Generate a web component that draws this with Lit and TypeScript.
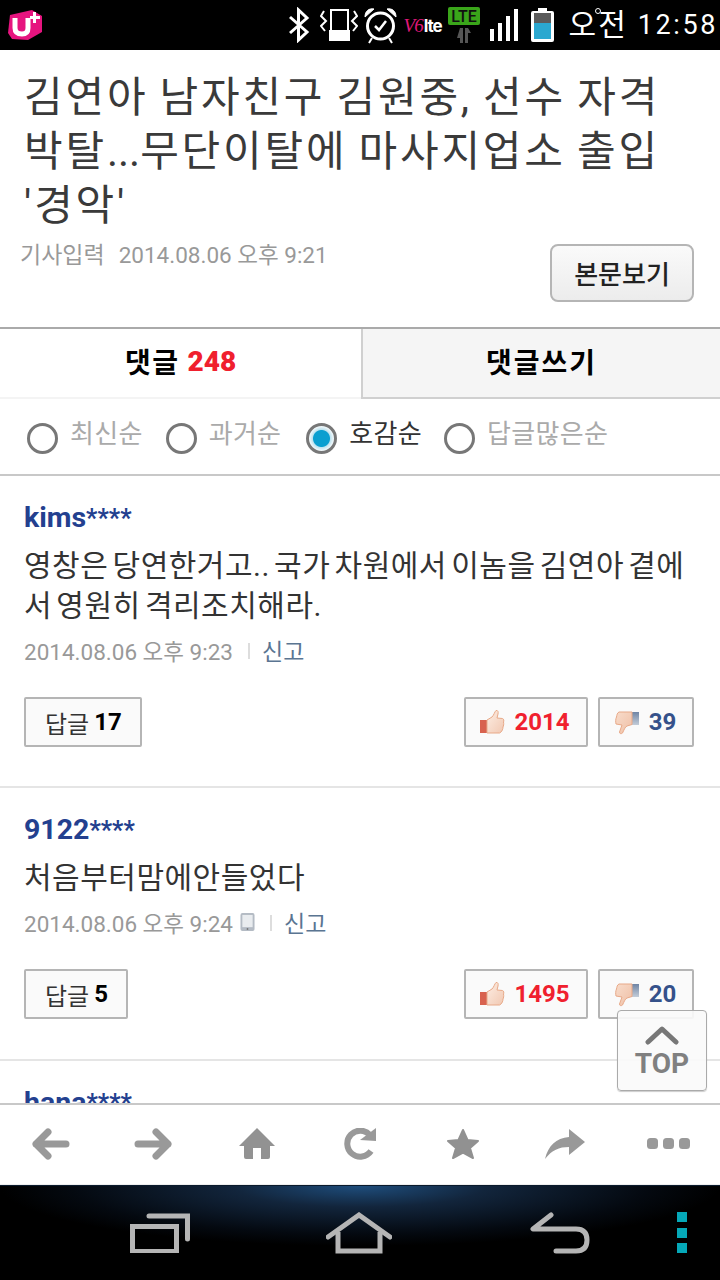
import { LitElement, html, css, svg } from "lit";
import { customElement } from "lit/decorators.js";

const thumbUp = svg`<svg class="thumb" width="26" height="26" viewBox="0 0 26 26"><defs><linearGradient id="tu" x1="0" y1="0" x2="1" y2="1"><stop offset="0" stop-color="#fdeee4"/><stop offset="1" stop-color="#f1c8b2"/></linearGradient></defs><rect x="1" y="11" width="7" height="13" fill="#d8624f"/><path d="M8 11 L13 8 C15 6 15.500 3 17 1.500 C19 1 19.500 3 19 5 L18 9 L23.500 9.500 C25 10 25 12 24.500 13 C25 15 24.500 17 24 18 C24 20 23 22 22 23 L20.500 24 L8 24 Z" fill="url(#tu)" stroke="#e8a988" stroke-width="1"/></svg>`;
const thumbDown = svg`<svg class="thumb" width="26" height="26" viewBox="0 0 26 26"><defs><linearGradient id="td" x1="0" y1="0" x2="1" y2="1"><stop offset="0" stop-color="#f8dccb"/><stop offset="1" stop-color="#efbfa5"/></linearGradient><linearGradient id="tb" x1="0" y1="0" x2="0" y2="1"><stop offset="0" stop-color="#6f85a5"/><stop offset="1" stop-color="#c3ccd8"/></linearGradient></defs><rect x="18" y="3" width="7" height="13" fill="url(#tb)"/><path d="M18 3 L5 3 C3 4 3 6 2.500 8 C1.500 10 1.500 13 2 15 L8 16 L5.500 23 C5.500 25 7.500 25 8.500 24 C10 21 11 18 13 17 L18 15.500 Z" fill="url(#td)" stroke="#e8a988" stroke-width="1"/></svg>`;

interface Comment { user: string; text: string; date: string; mobile: boolean; replies: number; up: number; down: number; }
const COMMENTS: Comment[] = [
  { user: "kims", text: "영창은 당연한거고.. 국가 차원에서 이놈을 김연아 곁에서 영원히 격리조치해라.", date: "2014.08.06 오후 9:23", mobile: false, replies: 17, up: 2014, down: 39 },
  { user: "9122", text: "처음부터맘에안들었다", date: "2014.08.06 오후 9:24", mobile: true, replies: 5, up: 1495, down: 20 },
];

@customElement("app-root")
export class AppRoot extends LitElement {
  static styles = css`
    :host { display: flex; flex-direction: column; width: 720px; height: 1280px; overflow: hidden; position: relative; background: #fff; font-family: Roboto, "Noto Sans CJK KR", sans-serif; }
    .status { height: 50px; flex: none; background: #000; display: flex; align-items: center; color: #fff; }
    .lg { margin-left: 7px; }
    .status-right { margin-left: auto; display: flex; align-items: center; height: 50px; }
    .ml6 { margin-left: 6px; }
    .ml8 { margin-left: 8px; }
    .ml10 { margin-left: 10px; }
    .ml14 { margin-left: 13px; }
    .volte { display: flex; align-items: baseline; width: 36px; margin-left: 7px; margin-top: 2px; }
    .v6 { font: italic 400 19px "Liberation Serif", serif; color: #e0187a; letter-spacing: -1px; }
    .lte { font: 700 17px Inter, sans-serif; color: #fff; letter-spacing: -1px; margin-left: 1px; }
    .ampm { font-size: 30px; letter-spacing: 2px; margin-left: 15px; position: relative; line-height: 50px; white-space: nowrap; }
    .ampm::after { content: ""; position: absolute; left: 26px; top: 8px; width: 4px; height: 4px; border: 1px solid #fff; border-radius: 50%; }
    .clock { font-size: 27px; letter-spacing: 2.600px; margin-left: 10px; margin-right: 2px; line-height: 50px; white-space: nowrap; }
    .main { flex: 1; min-height: 0; overflow: hidden; }
    .head { height: 279px; box-sizing: border-box; padding: 21px 20px 0 24px; border-bottom: 2px solid #aaa; }
    h1 { margin: 0; font-size: 42px; font-weight: 400; line-height: 54px; color: #3a3a3a; height: 161px; letter-spacing: 2.800px; word-spacing: -2px; white-space: nowrap; }
    h1 .line { display: block; }
    h1 .ell { letter-spacing: 0; }
    .head-row { display: flex; justify-content: space-between; align-items: flex-start; margin: 0 6px 0 -4px; }
    .meta { font-size: 23px; color: #999; line-height: 28px; margin-top: 9px; }
    .meta span { margin-left: 14px; font-size: 22.500px; }
    .body-btn { width: 144px; height: 58px; margin-top: 12px; box-sizing: border-box; border: 2px solid #b5b5b5; border-radius: 8px; background: linear-gradient(#fafafa, #ececec); display: flex; align-items: center; justify-content: center; font-size: 26px; font-weight: 500; color: #222; padding-bottom: 2px; }
    .tabs { display: flex; height: 70px; }
    .tab { display: flex; align-items: center; justify-content: center; font-size: 28px; font-weight: 700; color: #000; height: 70px; box-sizing: border-box; padding-bottom: 4px; letter-spacing: 2px; }
    .tab.on { width: 361px; background: #fff; border-bottom: 2px solid #f4f4f4; letter-spacing: 1.500px; }
    .tab.off { flex: 1; background: #f5f5f5; border-left: 2px solid #d0d0d0; border-bottom: 2px solid #d0d0d0; }
    .tab b { color: #f0202e; margin-left: 8px; letter-spacing: 0; }
    .sort { height: 77px; box-sizing: border-box; border-bottom: 2px solid #c8c8c8; display: flex; align-items: center; padding: 0 0 0 27px; font-size: 26px; color: #aaa; letter-spacing: 0.300px; }
    .opt { display: flex; align-items: center; margin-right: 23px; }
    .opt.wide { margin-right: 25px; }
    .opt.sel { margin-right: 22px; }
    .opt span { margin-left: 12px; margin-top: -11px; }
    .opt.sel span { color: #333; }
    .radio { width: 31px; height: 31px; box-sizing: border-box; border: 3px solid #777; border-radius: 50%; margin-top: 3px; background: #fff; }
    .opt.sel .radio { background: radial-gradient(circle, #0a9fd0 0 8px, #bfe3ef 9px, #fff 13px); }
    .comment { height: 312px; box-sizing: border-box; padding: 24px 26px 0 24px; border-bottom: 2px solid #e5e5e5; }
    .comment.second { height: 273px; }
    .comment.peek { height: 60px; }
    .user { font-size: 28.500px; font-weight: 700; color: #23408f; line-height: 36px; }
    .user small { font-size: 25px; }
    .text { font-size: 30px; color: #333; line-height: 40px; margin-top: 9px; letter-spacing: 0.500px; word-spacing: -3.700px; }
    .info { display: flex; align-items: center; font-size: 22.500px; color: #999; margin-top: 9px; height: 30px; }
    .info svg { margin-left: 7px; }
    .sep { width: 2px; height: 16px; background: #ddd; margin: 2px 12px 0 15px; }
    .report { color: #5a7592; font-size: 23px; }
    .actions { display: flex; align-items: center; margin-top: 32px; }
    .btn { height: 50px; box-sizing: border-box; border: 2px solid #b5b5b5; border-radius: 2px; background: #fafafa; display: flex; align-items: center; justify-content: center; font-size: 24px; color: #333; }
    .reply { padding: 0 18px 0 19px; margin-right: auto; }
    .reply b { color: #000; margin-left: 5px; }
    .up { width: 124px; margin-right: 10px; padding-right: 3px; }
    .down { width: 96px; padding-right: 2px; }
    .up b { color: #f0202e; margin-left: 9px; }
    .down b { color: #35518a; margin-left: 9px; }
    .thumb { flex: none; }
    .top { position: absolute; left: 617px; top: 1010px; width: 90px; height: 81px; box-sizing: border-box; border: 1px solid #aaa; border-radius: 4px; background: rgba(250,250,250,0.92); box-shadow: 0 1px 1px rgba(0,0,0,.2); display: flex; flex-direction: column; align-items: center; color: #808080; font-size: 28px; font-weight: 700; line-height: 30px; padding-top: 14px; }
    .top span { margin-top: 4px; }
    .toolbar { flex: none; height: 82px; border-top: 2px solid #c8c8c8; background: #fff; box-sizing: border-box; display: flex; align-items: center; padding: 0 0 2px 32px; border-bottom: 1px solid #eee; }
    .toolbar svg:nth-child(2) { margin-left: 64px; }
    .toolbar svg:nth-child(3) { margin-left: 67px; }
    .toolbar svg:nth-child(4) { margin-left: 68px; }
    .toolbar svg:nth-child(5) { margin-left: 69px; }
    .toolbar svg:nth-child(6) { margin-left: 65px; }
    .toolbar svg:nth-child(7) { margin-left: 62px; }
    .nav { flex: none; height: 95px; position: relative; background: radial-gradient(ellipse 360px 60px at 50% 0, #1e4d7c 0, #12253c 35%, #040910 80%, #000 100%); border-top: 1px solid #0a1a2c; box-sizing: border-box; display: flex; align-items: center; padding: 0 0 0 130px; }
    .nav svg { display: block; }
    .nav .home { margin-left: 136px; }
    .nav .back { margin-left: 138px; }
    .nav .dots { margin-left: 87px; }
  `;

  private statusIcons() {
    return html`
      <svg width="22" height="36" viewBox="0 0 22 36" fill="none" stroke="#fff" stroke-width="3"><path d="M2 10 L19 25 L10.500 33 L10.500 3 L19 11 L2 26"/></svg>
      <svg class="ml10" width="38" height="34" viewBox="0 0 38 34" fill="none" stroke="#fff" stroke-width="2"><path d="M4 3 L1 8 L6 13 L1 18 L5 23"/><path d="M34 3 L37 8 L32 13 L37 18 L33 23"/><rect x="11" y="2" width="17" height="29" stroke-width="2"/><rect x="10" y="23" width="19" height="9" fill="#fff"/></svg>
      <svg class="ml6" width="33" height="37" viewBox="0 0 33 37" fill="none" stroke="#fff"><circle cx="16.500" cy="19" r="13" stroke-width="3"/><path d="M11 19 L15 23 L22 14" stroke-width="2.500"/><path d="M1 10 C1 4 5 1 10 2 Z M32 10 C32 4 28 1 23 2 Z" fill="#fff" stroke-width="1"/><path d="M8 31 L5 36 M25 31 L28 36" stroke-width="2"/></svg>
      <span class="volte"><span class="v6">V6</span><span class="lte">lte</span></span>
      <svg class="ml8" width="32" height="36" viewBox="0 0 32 36"><rect x="0" y="0" width="32" height="18" rx="2" fill="#3aa51a"/><path d="M12 21 H15 V36 H12 V31 H9 Z M17 21 H20 L23 26 H20 V36 H17 Z" fill="#555"/><text x="16" y="14.500" text-anchor="middle" font-family="Roboto,sans-serif" font-weight="500" font-size="16" fill="#111">LTE</text></svg>
      <svg class="ml10" width="28" height="32" viewBox="0 0 28 32" fill="#fff"><rect x="0" y="20" width="4" height="12"/><rect x="8" y="14" width="4" height="18"/><rect x="16" y="7" width="4" height="25"/><rect x="24" y="0" width="4" height="32"/></svg>
      <svg class="ml14" width="23" height="34" viewBox="0 0 23 34"><path d="M7 0 H16 V3 H21 Q23 3 23 5 V32 Q23 34 21 34 H2 Q0 34 0 32 V5 Q0 3 2 3 H7 Z" fill="#fff"/><rect x="3" y="5" width="17" height="10" fill="#5c5c5c"/><rect x="3" y="15" width="17" height="16" fill="#2ba8d0"/></svg>`;
  }

  private renderComment(c: Comment, cls: string) {
    return html`<div class="comment ${cls}">
      <div class="user">${c.user}<small>****</small></div>
      <div class="text">${c.text}</div>
      <div class="info">${c.date}${c.mobile ? svg`<svg width="15" height="20" viewBox="0 0 16 20"><rect x="0.500" y="0.500" width="15" height="19" rx="2" fill="#b4bbc4"/><rect x="2.500" y="2.500" width="11" height="13" fill="#e9ecef"/><circle cx="8" cy="17.500" r="1" fill="#777"/></svg>` : ""}<i class="sep"></i><span class="report">신고</span></div>
      <div class="actions">
        <div class="btn reply">답글<b>${c.replies}</b></div>
        <div class="btn up">${thumbUp}<b>${c.up}</b></div>
        <div class="btn down">${thumbDown}<b>${c.down}</b></div>
      </div>
    </div>`;
  }

  render() {
    return html`
      <div class="status">
        <svg class="lg" width="36" height="32" viewBox="0 0 36 32"><path d="M3 6 L25 1 L35 7 L35 23 L21 31 L5 30 L1 24 Z" fill="#e6147f"/><path d="M8 9 V19 Q8 25 15 25 Q21 25 21 19 V9" fill="none" stroke="#fff" stroke-width="5"/><path d="M23 7 H26 V3 H29 V7 H33 V10 H29 V14 H26 V10 H23 Z" fill="#fff"/></svg>
        <div class="status-right">
          ${this.statusIcons()}
          <span class="ampm">오전</span><span class="clock">12:58</span>
        </div>
      </div>
      <div class="main">
        <div class="head">
          <h1><span class="line">김연아 남자친구 김원중, 선수 자격</span><span class="line">박탈<span class="ell">...</span>무단이탈에 마사지업소 출입</span><span class="line">'경악'</span></h1>
          <div class="head-row">
            <div class="meta">기사입력<span>2014.08.06 오후 9:21</span></div>
            <div class="body-btn">본문보기</div>
          </div>
        </div>
        <div class="tabs">
          <div class="tab on">댓글<b>248</b></div>
          <div class="tab off">댓글쓰기</div>
        </div>
        <div class="sort">
          <div class="opt"><i class="radio"></i><span>최신순</span></div>
          <div class="opt wide"><i class="radio"></i><span>과거순</span></div>
          <div class="opt sel"><i class="radio"></i><span>호감순</span></div>
          <div class="opt"><i class="radio"></i><span>답글많은순</span></div>
        </div>
        ${this.renderComment(COMMENTS[0], "")}
        ${this.renderComment(COMMENTS[1], "second")}
        <div class="comment peek"><div class="user">hana<small>****</small></div></div>
      </div>
      <div class="top">
        <svg width="34" height="20" viewBox="0 0 34 20" fill="none" stroke="#777" stroke-width="5" stroke-linecap="round" stroke-linejoin="round"><path d="M3 17 L17 4 L31 17"/></svg>
        <span>TOP</span>
      </div>
      <div class="toolbar">
        <svg width="38" height="32" viewBox="0 0 38 32" fill="none" stroke="#999" stroke-width="7" stroke-linecap="round" stroke-linejoin="round"><path d="M34 16 H4 M16 4 L4 16 L16 28"/></svg>
        <svg width="38" height="32" viewBox="0 0 38 32" fill="none" stroke="#999" stroke-width="7" stroke-linecap="round" stroke-linejoin="round"><path d="M4 16 H34 M22 4 L34 16 L22 28"/></svg>
        <svg width="36" height="32" viewBox="0 0 36 32" fill="#929292"><path d="M18 0 L36 18 H31 V29 Q31 31 29 31 H22 V20 H14 V31 H7 Q5 31 5 29 V18 H0 Z"/></svg>
        <svg width="34" height="32" viewBox="0 0 34 32" fill="none"><path d="M27 7 A13 13 0 1 0 28 23" stroke="#999" stroke-width="6"/><path d="M17 12 L33 13 L33 0 Z" fill="#999"/></svg>
        <svg width="34" height="32" viewBox="0 0 34 32" fill="#919191" stroke="#919191" stroke-width="2" stroke-linejoin="round"><path d="M17 2 L21.500 12 L32 13 L24 20 L27 30 L17 24.500 L7 30 L10 20 L2 13 L12.500 12 Z"/></svg>
        <svg width="40" height="30" viewBox="0 0 40 30" fill="#999"><path d="M24 0 L40 13 L24 26 V18 C14 18 7 21 0 30 C3 17 11 9 24 8 Z"/></svg>
        <svg width="43" height="12" viewBox="0 0 43 12" fill="#999"><rect width="11" height="11" rx="3.500"/><rect x="16" width="11" height="11" rx="3.500"/><rect x="32" width="11" height="11" rx="3.500"/></svg>
      </div>
      <div class="nav">
        <svg width="60" height="40" viewBox="0 0 60 40" fill="none" stroke="#b5b5b5" stroke-width="5"><rect x="2.500" y="13.500" width="44" height="25"/><path d="M19 3 H57.500 V26" stroke-linecap="round"/></svg>
        <svg class="home" width="66" height="42" viewBox="0 0 66 42" fill="none" stroke="#b5b5b5" stroke-width="5" stroke-linecap="round"><path d="M2 25 L33 3 L64 25"/><path d="M12 20 V39 H54 V20" stroke-linecap="butt"/></svg>
        <svg class="back" width="60" height="42" viewBox="0 0 60 42" fill="none" stroke="#b5b5b5" stroke-width="5" stroke-linecap="round" stroke-linejoin="round"><path d="M21 3 L3 17 H46 Q57 17 57 28 Q57 39 46 39 H26"/></svg>
        <svg class="dots" width="10" height="42" viewBox="0 0 10 42" fill="#05a8b8"><rect width="10" height="10"/><rect y="16" width="10" height="10"/><rect y="31" width="10" height="10"/></svg>
      </div>
    `;
  }
}
